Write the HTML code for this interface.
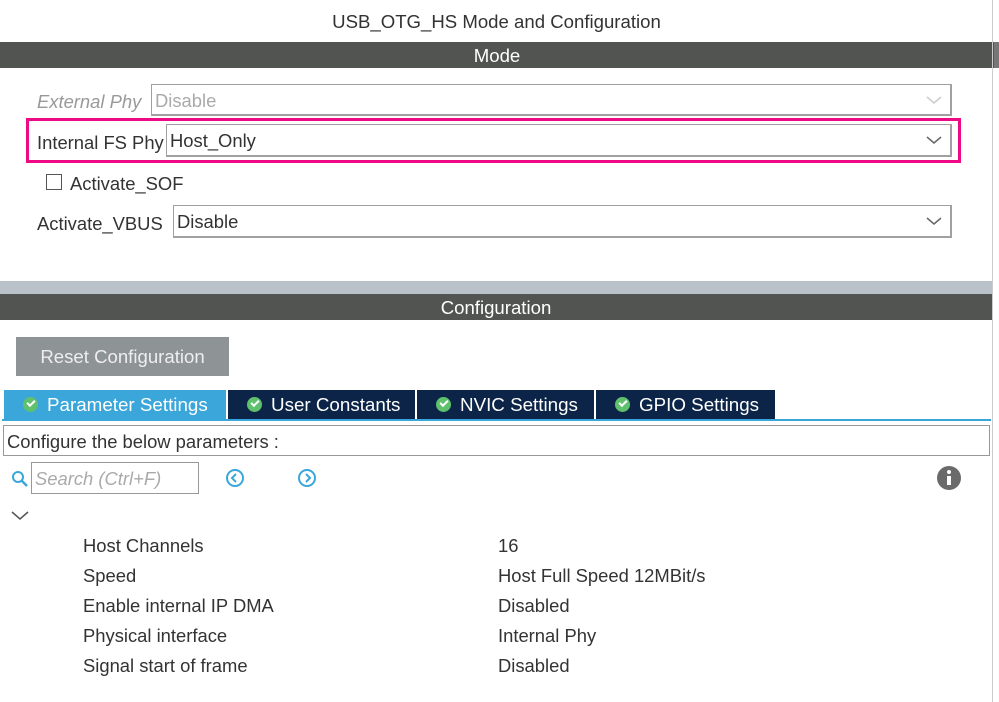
<!DOCTYPE html><html><head><style>
*{margin:0;padding:0;box-sizing:border-box}
body{width:999px;height:702px;background:#fff;font-family:"Liberation Sans",sans-serif;position:relative;overflow:hidden;color:#333}
.a{position:absolute;white-space:nowrap}
.sel{position:absolute;border:1px solid #a0a0a0;border-bottom:2px solid #a0a0a0;border-right:2px solid #a0a0a0;font-size:18.4px;padding-left:3px;line-height:31px;color:#333}
.chev{position:absolute;right:8px;top:10px}
.tab{position:absolute;top:390px;height:30px;color:#fff;font-size:18.8px;line-height:29px;background:#0b2447}
.ck{display:inline-block;width:15px;height:15px;border-radius:50%;background:#5fc16e;vertical-align:-1px;margin:0 9px 0 19px;position:relative}
.ck:after{content:"";position:absolute;left:4px;top:3px;width:6px;height:3px;border-left:2px solid #fff;border-bottom:2px solid #fff;transform:rotate(-45deg)}
.r{position:absolute;font-size:18.4px;top:1px}
</style></head><body>
<div class="a" style="left:0;top:11px;width:993px;text-align:center;font-size:18.6px">USB_OTG_HS Mode and Configuration</div>
<div class="a" style="left:0;top:42px;width:994px;height:26px;background:#525452;color:#fff;text-align:center;font-size:18.6px;line-height:27px">Mode</div>
<div style="position:absolute;left:992px;top:0;width:1px;height:702px;background:#ccc"></div>
<div style="position:absolute;left:994px;top:42px;width:5px;height:26px;background:#777"></div>
<div class="a" style="left:37px;top:91px;font-size:18.4px;font-style:italic;color:#999">External Phy</div>
<div class="sel" style="left:151px;top:84px;width:801px;height:32px;color:#aaa">Disable<svg class="chev" width="16" height="10"><path d="M1 2l7 6 7-6" stroke="#ccc" fill="none" stroke-width="1.5"/></svg></div>
<div style="position:absolute;left:26px;top:118px;width:935px;height:45px;border:3px solid #ee0a84"></div>
<div class="a" style="left:37px;top:132px;font-size:18.4px">Internal FS Phy</div>
<div class="sel" style="left:166px;top:124px;width:786px;height:33px">Host_Only<svg class="chev" width="16" height="10"><path d="M1 2l7 6 7-6" stroke="#666" fill="none" stroke-width="1.5"/></svg></div>
<div style="position:absolute;left:46px;top:174px;width:16px;height:16px;border:1px solid #555"></div>
<div class="a" style="left:70px;top:173px;font-size:18.4px">Activate_SOF</div>
<div class="a" style="left:37px;top:213px;font-size:18.4px">Activate_VBUS</div>
<div class="sel" style="left:173px;top:205px;width:779px;height:33px">Disable<svg class="chev" width="16" height="10"><path d="M1 2l7 6 7-6" stroke="#666" fill="none" stroke-width="1.5"/></svg></div>
<div style="position:absolute;left:0;top:281px;width:992px;height:13px;background:#b8c2c8"></div>
<div class="a" style="left:0;top:294px;width:992px;height:26px;background:#525452;color:#fff;text-align:center;font-size:18.6px;line-height:28px">Configuration</div>
<div class="a" style="left:16px;top:337px;width:213px;height:39px;background:#8e9396;color:#eee;font-size:18.6px;line-height:40px;text-align:center">Reset Configuration</div>
<div class="tab" style="left:4px;width:222px;background:#3aa6da"><span class="ck"></span>Parameter Settings</div>
<div class="tab" style="left:228px;width:187px"><span class="ck"></span>User Constants</div>
<div class="tab" style="left:417px;width:177px"><span class="ck"></span>NVIC Settings</div>
<div class="tab" style="left:596px;width:179px"><span class="ck"></span>GPIO Settings</div>
<div style="position:absolute;left:2px;top:419px;width:989px;height:2px;background:#3aa6da"></div>
<div class="a" style="left:3px;top:425px;width:987px;height:31px;border:1px solid #999;font-size:18.4px;line-height:31px;padding-left:3px">Configure the below parameters :</div>
<svg class="a" style="left:11px;top:470px" width="18" height="18"><circle cx="7" cy="7" r="5" stroke="#3aa6da" stroke-width="2" fill="none"/><path d="M11 11l5 5" stroke="#3aa6da" stroke-width="2.5"/></svg>
<div class="a" style="left:31px;top:462px;width:168px;height:32px;border:1px solid #999;font-size:18.4px;font-style:italic;color:#aaa;line-height:31px;padding-left:3px">Search (Ctrl+F)</div>
<svg class="a" style="left:225px;top:468px" width="20" height="20"><circle cx="10" cy="10" r="8" stroke="#3aa6da" stroke-width="2" fill="none"/><path d="M11 6l-4 4 4 4" stroke="#3aa6da" stroke-width="2" fill="none"/></svg>
<svg class="a" style="left:297px;top:468px" width="20" height="20"><circle cx="10" cy="10" r="8" stroke="#3aa6da" stroke-width="2" fill="none"/><path d="M9 6l4 4-4 4" stroke="#3aa6da" stroke-width="2" fill="none"/></svg>
<svg class="a" style="left:936px;top:465px" width="26" height="26"><circle cx="13" cy="13" r="12" fill="#6a6a6a"/><circle cx="13" cy="7" r="2" fill="#fff"/><rect x="11" y="11" width="4" height="9" fill="#fff"/></svg>
<svg class="a" style="left:11px;top:510px" width="18" height="12"><path d="M1 2l8 7 8-7" stroke="#555" fill="none" stroke-width="1.5"/></svg>
<div class="r" style="left:83px;top:535px">Host Channels</div><div class="r" style="left:498px;top:535px">16</div>
<div class="r" style="left:83px;top:565px">Speed</div><div class="r" style="left:498px;top:565px">Host Full Speed 12MBit/s</div>
<div class="r" style="left:83px;top:595px">Enable internal IP DMA</div><div class="r" style="left:498px;top:595px">Disabled</div>
<div class="r" style="left:83px;top:625px">Physical interface</div><div class="r" style="left:498px;top:625px">Internal Phy</div>
<div class="r" style="left:83px;top:655px">Signal start of frame</div><div class="r" style="left:498px;top:655px">Disabled</div>
</body></html>
